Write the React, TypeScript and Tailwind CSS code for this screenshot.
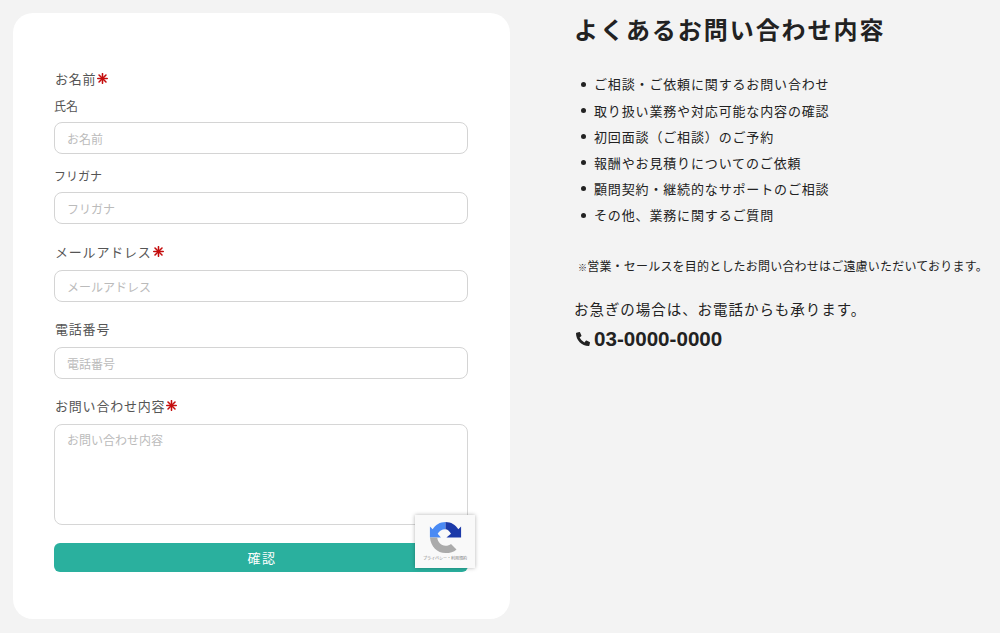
import React from "react";
import { FaPhoneAlt } from "react-icons/fa";

const font = { fontFamily: '"Noto Sans CJK JP", "Noto Sans", sans-serif' };

function Req() {
  return (
    <svg viewBox="0 0 12 12" className="ml-[1px] h-[11px] w-[11px] shrink-0 -translate-y-[1px]" aria-hidden="true">
      <g stroke="#c40d0d" strokeWidth="1.7" strokeLinecap="round">
        <line x1="6" y1="0.8" x2="6" y2="11.2" />
        <line x1="0.8" y1="6" x2="11.2" y2="6" />
        <line x1="2.2" y1="2.2" x2="9.8" y2="9.8" />
        <line x1="9.8" y1="2.2" x2="2.2" y2="9.8" />
      </g>
    </svg>
  );
}

function Label({ children, req, className }: { children: React.ReactNode; req?: boolean; className: string }) {
  return (
    <div className={`flex h-5 items-center pl-px text-[13px] leading-5 tracking-[0.8px] text-[#555555] ${className}`}>
      {children}
      {req && <Req />}
    </div>
  );
}

function Sub({ children, className }: { children: React.ReactNode; className: string }) {
  return <div className={`h-5 text-xs leading-5 text-[#555555] ${className}`}>{children}</div>;
}

function Field({ placeholder, className }: { placeholder: string; className: string }) {
  return (
    <input
      placeholder={placeholder}
      className={`block h-8 w-full rounded-lg border border-[#d4d4d4] bg-white px-3 text-xs text-[#333333] outline-none placeholder:text-[#bbbbbb] ${className}`}
    />
  );
}

const items = [
  "ご相談・ご依頼に関するお問い合わせ",
  "取り扱い業務や対応可能な内容の確認",
  "初回面談（ご相談）のご予約",
  "報酬やお見積りについてのご依頼",
  "顧問契約・継続的なサポートのご相談",
  "その他、業務に関するご質問",
];

export default function App() {
  return (
    <div className="flex h-[633px] w-[1000px] overflow-hidden bg-[#f3f3f3] p-[13px] pb-[14px]" style={font}>
      <div className="relative h-[606px] w-[497px] shrink-0 rounded-[20px] bg-white pl-[41px] pr-[42px] pt-[56px]">
        <Label req className="">お名前</Label>
        <Sub className="mt-[7px]">氏名</Sub>
        <Field placeholder="お名前" className="mt-[6px]" />
        <Sub className="mt-3">フリガナ</Sub>
        <Field placeholder="フリガナ" className="mt-[6px]" />
        <Label req className="mt-[18px]">メールアドレス</Label>
        <Field placeholder="メールアドレス" className="mt-2" />
        <Label className="mt-[17px]">電話番号</Label>
        <Field placeholder="電話番号" className="mt-2" />
        <Label req className="mt-[17px]">お問い合わせ内容</Label>
        <textarea
          placeholder="お問い合わせ内容"
          className="mt-2 block h-[101px] w-full resize-none rounded-lg border border-[#d6d6d6] bg-white px-3 py-[7px] text-xs text-[#333333] outline-none placeholder:text-[#bbbbbb]"
        />
        <button className="mt-[18px] block h-[29px] w-full rounded-md bg-[#2ab09e] pl-[2px] text-[13px] tracking-[1.5px] text-white">
          確認
        </button>

        <div className="absolute left-[402px] top-[502px] flex h-[53px] w-[60px] flex-col items-center bg-[#f9f9f9] pt-[6px] shadow-[0_0_4px_rgba(0,0,0,0.3)]">
          <svg viewBox="0 0 36 36" className="h-[33px] w-[33px]" aria-hidden="true">
            <path d="M18 1 C12 1 7 4 4 9 L1 6 L1 18 L13 18 L9.5 14 C11 11 14 9 18 9 Z" fill="#4a8af4" />
            <path d="M18 1 C24 1 29 4 32 9 L35 6 L35 18 L19 18 L24 14 C22.5 11 20 9 18 9 Z" fill="#1c3aa9" />
            <path d="M1 18 L9 18 C9.5 23 13 27 18 27 C20.5 27 22.5 26 24 25 L30 31 C27 34 23 35 18 35 C9 35 2 28 1 18 Z" fill="#ababab" />
          </svg>
          <div className="mt-[2px] whitespace-nowrap text-[4px] leading-[5px] text-[#777777]">プライバシー・利用規約</div>
        </div>
      </div>

      <div className="ml-[64px] min-w-0 flex-1 text-[#222222]">
        <h1 className="mt-[-2px] h-9 whitespace-nowrap text-2xl font-bold leading-9 tracking-[1.95px]">よくあるお問い合わせ内容</h1>
        <ul className="mt-[24px]">
          {items.map((t) => (
            <li key={t} className="flex h-[26.2px] items-center whitespace-nowrap text-[13px] tracking-[0.85px]">
              <span className="mr-[8px] ml-[7px] h-[5px] w-[5px] rounded-full bg-[#222222]" />
              {t}
            </li>
          ))}
        </ul>
        <p className="ml-1 mt-[28px] h-5 whitespace-nowrap text-xs leading-5 tracking-[0.2px]">
          <span className="text-[9px] font-bold">※</span>営業・セールスを目的としたお問い合わせはご遠慮いただいております。
        </p>
        <p className="mt-[21px] h-6 whitespace-nowrap text-[14.5px] leading-6 tracking-[0.95px]">お急ぎの場合は、お電話からも承ります。</p>
        <div className="mt-[6px] flex h-6 items-center text-[20.6px] font-bold leading-6" style={{ fontFamily: '"Liberation Sans", sans-serif' }}>
          <FaPhoneAlt className="ml-[2px] mr-[4px] h-[14px] w-[14px] text-[#222222]" />
          03-0000-0000
        </div>
      </div>
    </div>
  );
}
